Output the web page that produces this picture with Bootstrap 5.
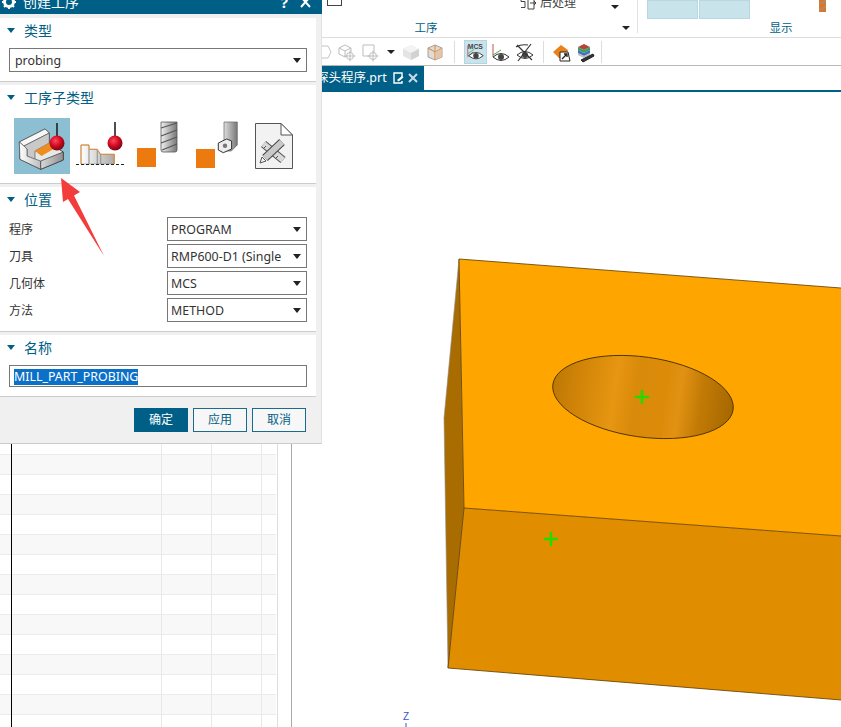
<!DOCTYPE html>
<html lang="zh-CN">
<head>
    <meta charset="UTF-8">
    <meta name="viewport" content="width=device-width, initial-scale=1.0">
    <title>创建工序</title>
    <link href="https://cdn.jsdelivr.net/npm/bootstrap@5.3.0/dist/css/bootstrap.min.css" rel="stylesheet">
    <style>
        html, body { height: 727px; overflow: hidden; }
        body {
            position: relative;
            background: #fff;
            color: #333;
            font-family: "Noto Sans", "Noto Sans CJK SC", sans-serif;
            font-size: 13px;
        }
        /* ribbon */
        .nx-ribbon { height: 38px; border-bottom: 1px solid #ddd; overflow: hidden; }
        .nx-group { height: 33px; border-right: 1px solid #e2e2e2; }
        .nx-group-a { width: 638px; }
        .nx-group-b { width: 203px; border-right: 0; }
        .nx-group-row { height: 21px; }
        .nx-group-label { height: 14px; line-height: 14px; font-size: 11.5px; color: #006085; position: relative; }
        .nx-check { width: 15px; height: 14px; margin-top: -8px; margin-left: 327px; border: 1px solid #444; background: #fff; }
        .nx-post { margin-left: 178px; margin-top: -6px; height: 18px; font-size: 12px; line-height: 18px; color: #444; }
        .nx-post svg { margin-right: 4px; }
        .nx-caret { width: 0; height: 0; border-left: 4px solid transparent; border-right: 4px solid transparent; border-top: 4px solid #222; }
        .nx-caret-post { margin-left: 35px; margin-top: 5px; }
        .nx-caret-group { position: absolute; left: 622px; top: 5px; }
        .nx-tile { width: 51px; height: 19px; background: #c9e3ea; border: 1px solid #b5d8e1; }
        .nx-tile-first { margin-left: 9px; margin-right: 1px; }
        .nx-drill { width: 7px; height: 12px; margin-left: 69px; background: repeating-linear-gradient(150deg, #d9762a 0 3px, #b7885f 3px 5px); }
        /* graphics toolbar */
        .nx-toolbar { height: 28px; padding-left: 310px; border-bottom: 1px solid #b9b9b9; }
        .nx-tool { width: 24px; height: 24px; }
        .nx-tool-on { width: 23px; background: #c9e3ec; border: 1px solid #b3d5e1; margin-left: 9px; margin-right: 1px; }
        .nx-tool-drop { width: 17px; height: 24px; }
        .nx-tool-sep { width: 1px; height: 22px; background: #ddd; margin-left: 7px; }
        .nx-sep-b { margin-right: 5px; }
        .nx-sep-c { margin-left: 4px; }
        /* file tab */
        .nx-tabs { height: 26px; border-bottom: 2px solid #005f87; }
        .nx-tab { height: 24px; margin-left: 316px; width: 108px; background: #005f87; color: #fff; font-size: 12.5px; white-space: nowrap; overflow: hidden; }
        .nx-tab svg { margin-left: 6px; flex: none; }
        .nx-tab svg + svg { margin-left: 4px; }
        /* left navigator */
        .nx-main { height: 635px; }
        .nx-nav { width: 292px; height: 635px; padding-top: 2px; border-right: 1px solid #aaa; overflow: hidden; flex: none; }
        .nx-grid { width: 278px; height: 100%; border-right: 1px solid #ddd; }
        .nx-nav .table { width: 276px; table-layout: fixed; margin: 0; --bs-table-bg: transparent; }
        .nx-nav .table td { height: 20px; padding: 0; border-top: 1px solid #ebebeb; border-bottom: 0; border-right: 1px solid #e8e8e8; }
        .nx-nav .table tr:nth-child(odd) td { background: #f8f8f8; }
        .nx-nav .table td:first-child { border-right: 1px solid #000; }
        .nx-nav .table td:last-child { border-right: 0; }
        /* dialog */
        .nx-dialog { position: absolute; left: 0; top: 0; width: 322px; height: 444px; background: #f0f0f0; border-right: 1px solid #e2e2e2; border-bottom: 1px solid #ccc; }
        .nx-title { height: 14px; background: #005f87; color: #fff; font-size: 14px; line-height: 20px; overflow: hidden; margin-right: -1px; margin-bottom: 4px; padding: 0 11px 10px 2px; }
        .nx-title span { margin-left: 7px; }
        .nx-title b { font-weight: 700; font-size: 15px; margin-left: auto; margin-right: 12px; }
        .nx-sect { background: #fff; margin-right: 5px; border-bottom: 1px solid #ccc; margin-bottom: 3px; padding: 0 9px 9px; }
        .nx-sect-last { margin-bottom: 0; }
        .nx-head { height: 26px; padding-bottom: 2px; color: #006085; font-size: 14px; }
        .nx-head i { width: 0; height: 0; margin: 0 9px 0 -2px; border-left: 4.5px solid transparent; border-right: 4.5px solid transparent; border-top: 5px solid #005f87; }
        .nx-field { height: 24px; margin-top: 3px; font-size: 12px; }
        .nx-field label { padding-top: 2px; }
        .nx-head + .nx-field { margin-top: 4px; }
        .nx-dialog .form-select {
            height: 24px;
            padding: 1px 24px 0 3px;
            font-size: 12.4px;
            line-height: 21px;
            color: #333;
            border: 1px solid #777;
            border-radius: 0;
            background-position: right 4px center;
            background-size: 10px 5px;
            background-image: url("data:image/svg+xml,%3csvg xmlns='http://www.w3.org/2000/svg' viewBox='0 0 10 5'%3e%3cpath d='M1 0h8L5 5z' fill='%23222'/%3e%3c/svg%3e");
        }
        .nx-field .form-select { width: 140px; }
        .nx-dialog .nx-pick { margin-top: 4px; padding-left: 5px; }
        .nx-name { height: 22px; margin-top: 4px; padding: 0 4px; line-height: 20px; font-size: 12.4px; border: 1px solid #777; border-radius: 0; min-height: 0; }
        .nx-name span { background: #0a70c8; color: #fff; display: inline-block; line-height: 16px; vertical-align: middle; }
        .nx-subtypes { margin: 7px 0 0 5px; gap: 3px; height: 56px; }
        .nx-subtype { width: 56px; height: 56px; }
        .nx-subtype-on { background: #8dbfd2; }
        .nx-foot { padding: 11px 15px 0 0; gap: 5px; }
        .nx-foot .btn { width: 54px; height: 24px; padding: 0; font-size: 12px; line-height: 22px; border-radius: 0; border: 1px solid #1c6a8c; color: #006085; background: #f7f7f7; }
        .nx-foot .btn-primary { background: #005f87; color: #fff; border-color: #005f87; }
        /* red arrow drawn on top */
        .nx-arrow { position: absolute; left: 55px; top: 172px; }
        .nx-view { display: block; flex: none; }
    </style>
</head>
<body>
    <div class="nx-ribbon d-flex">
        <div class="nx-group nx-group-a">
            <div class="nx-group-row d-flex">
                <div class="nx-check"></div>
                <div class="nx-post d-flex align-items-center">
                    <svg width="16" height="16" viewBox="0 0 16 16" fill="none" stroke="#444"><path d="M1 1.5h4M1 1.5v5h4v6H1M8 3v11h6V3M10 8h6M14 6l2 2-2 2"/></svg>
                    后处理
                </div>
                <div class="nx-caret nx-caret-post"></div>
            </div>
            <div class="nx-group-label text-center" style="padding-left: 215px">工序<div class="nx-caret nx-caret-group"></div></div>
        </div>
        <div class="nx-group nx-group-b">
            <div class="nx-group-row d-flex">
                <div class="nx-tile nx-tile-first"></div>
                <div class="nx-tile"></div>
                <div class="nx-drill"></div>
            </div>
            <div class="nx-group-label text-center" style="padding-left: 83px">显示</div>
        </div>
    </div>

    <div class="nx-toolbar d-flex align-items-center">
        <svg class="nx-tool" viewBox="0 0 24 24" fill="#fff" stroke="#c4c4c4"><path d="M12 6l6 0 3 6-3 6h-6l-3-6z"/></svg>
        <svg class="nx-tool" viewBox="0 0 24 24" fill="#fff" stroke="#bdbdbd"><path d="M5 8l6-3 6 3v6l-6 3-6-3zM5 8l6 3 6-3M11 11v6"/><circle cx="16" cy="16" r="3.5"/><path d="M16 10.5v11M10.5 16h11"/></svg>
        <svg class="nx-tool" viewBox="0 0 24 24" fill="#fff" stroke="#bdbdbd"><path d="M5 5h11v11H5z"/><circle cx="15" cy="16" r="3.5"/><path d="M15 10.5v11M9.5 16h11"/></svg>
        <div class="nx-tool-drop d-flex align-items-center justify-content-center"><div class="nx-caret"></div></div>
        <svg class="nx-tool" viewBox="0 0 24 24"><path d="M4 9l8-4 8 4v7l-8 4-8-4z" fill="#e4e4e4"/><path d="M4 9l8 4 8-4-8-4z" fill="#f3f3f3"/><path d="M12 13v7l8-4V9z" fill="#d2d2d2"/></svg>
        <svg class="nx-tool" viewBox="0 0 24 24"><path d="M5 8l7-3 7 3v9l-7 3-7-3z" fill="#dcdcdc" stroke="#b0a090"/><path d="M12 5v15M5 8l7 4 7-4" fill="none" stroke="#d98a3a"/><path d="M12 12v8l7-3V8z" fill="#e7bd95" opacity=".7"/></svg>
        <div class="nx-tool-sep"></div>
        <svg class="nx-tool nx-tool-on" viewBox="0 0 23 24"><text x="3" y="9" font-family="Liberation Sans, sans-serif" font-size="7.5" font-weight="700" fill="#444">MCS</text><path d="M3 5v12M3 17l6-5" fill="none" stroke="#c44" stroke-width=".8"/><path d="M3 14l7-5" stroke="#4a4" stroke-width=".8"/><path d="M4 16q8-7 16 0-8 7-16 0z" fill="#fff" stroke="#333"/><circle cx="12" cy="16" r="3" fill="#444"/></svg>
        <svg class="nx-tool" viewBox="0 0 24 24"><path d="M5 4v13" stroke="#b55" fill="none"/><path d="M5 15l8-5" stroke="#4a4" fill="none"/><path d="M5 17q8-7 16 0-8 7-16 0z" fill="#fff" stroke="#333"/><circle cx="13" cy="17" r="3" fill="#444"/></svg>
        <svg class="nx-tool" viewBox="0 0 24 24"><path d="M5 15q8-7 16 0-8 7-16 0z" fill="#fff" stroke="#333"/><circle cx="13" cy="15" r="3" fill="#444"/><path d="M5 5l15 15M19 4L6 21M4 7q5-3 12-2" fill="none" stroke="#333" stroke-width="1.2"/></svg>
        <div class="nx-tool-sep nx-sep-b"></div>
        <svg class="nx-tool" viewBox="0 0 24 24"><path d="M4 12l8-7 7 5-4 9-5-1z" fill="#e9821a"/><path d="M11 12h8l2 9H11z" fill="#fff" stroke="#222"/><path d="M13 19l5-5M15 14h3v3" fill="none" stroke="#222" stroke-width="1.3"/></svg>
        <svg class="nx-tool" viewBox="0 0 24 24"><path d="M5 7l6-3 6 3-6 3z" fill="#b5443a"/><path d="M5 7l6 3 6-3v3l-6 3-6-3z" fill="#3aa05a"/><path d="M5 10l6 3 6-3v3l-6 3-6-3z" fill="#3b72c4"/><path d="M5 13l6 3 6-3v2l-6 3-6-3z" fill="#bbb"/><path d="M8 20l12-6 1 2-11 6z" fill="#333" stroke="#222"/></svg>
        <div class="nx-tool-sep nx-sep-c"></div>
    </div>

    <div class="nx-tabs">
        <div class="nx-tab d-flex align-items-center">
            探头程序.prt
            <svg width="11" height="12" viewBox="0 0 11 12" fill="none" stroke="#fff" stroke-width="1.4"><path d="M9 5V1H1v10h8V9"/><path d="M4 8l5-4 1.5 1.5-5 4z" fill="#fff" stroke="none"/></svg>
            <svg width="10" height="10" viewBox="0 0 10 10" stroke="#c9dbe3" stroke-width="2"><path d="M1 1l8 8M9 1L1 9"/></svg>
        </div>
    </div>

    <div class="nx-main d-flex">
        <div class="nx-nav">
            <div class="nx-grid">
                <table class="table">
                    <colgroup><col style="width: 11px"><col style="width: 150px"><col style="width: 50px"><col style="width: 50px"><col></colgroup>
                    <tbody id="navRows"></tbody>
                </table>
            </div>
        </div>
        <svg class="nx-view" width="549" height="635" viewBox="292 92 549 635">
            <defs>
                <linearGradient id="holeShade" x1="0" x2="1" y1="0" y2="0">
                    <stop offset="0" stop-color="#bf7805"/>
                    <stop offset=".18" stop-color="#d58709"/>
                    <stop offset=".34" stop-color="#e69610"/>
                    <stop offset=".46" stop-color="#da8a0a"/>
                    <stop offset=".62" stop-color="#dc8b09"/>
                    <stop offset=".7" stop-color="#e29213"/>
                    <stop offset=".82" stop-color="#c27a05"/>
                    <stop offset="1" stop-color="#a56800"/>
                </linearGradient>
            </defs>
            <polygon points="459,259 444,418 448,668 464,508" fill="#a96c00" stroke="#8f8f8f" stroke-width=".6"/>
            <polygon points="464,508 841,536 841,700 448,668" fill="#e18d00"/>
            <polygon points="459,259 841,288 841,536 464,508" fill="#ffa500"/>
            <path d="M459 259L464 508L448 668M464 508L841 536M459 259L841 288M448 668L841 700" fill="none" stroke="#5c3a00" stroke-width=".8"/>
            <ellipse cx="643" cy="397" rx="91" ry="40" transform="rotate(8 643 397)" fill="url(#holeShade)" stroke="#4a3000" stroke-width=".9"/>
            <path d="M642 390v14M635 397h14M551 532v14M544 539h14" stroke="#22dc00" stroke-width="2.5"/>
            <text x="403" y="720" font-family="Liberation Sans, sans-serif" font-size="10" fill="#3a55c8">Z</text>
            <path d="M406 723v4" stroke="#3a55c8"/>
        </svg>
    </div>

    <div class="nx-dialog">
        <div class="nx-title d-flex align-items-center">
            <svg width="14" height="14" viewBox="0 0 14 14"><circle cx="7" cy="7" r="4.5" fill="none" stroke="#fff" stroke-width="3"/><path d="M7 0v3M7 11v3M0 7h3M11 7h3M2 2l2 2M10 10l2 2M12 2l-2 2M4 10l-2 2" stroke="#fff" stroke-width="2"/></svg>
            <span>创建工序</span>
            <b>?</b>
            <svg width="11" height="14" viewBox="0 0 11 14" stroke="#fff" stroke-width="2"><path d="M1 2l9 10M10 2L1 12"/></svg>
        </div>

        <section class="nx-sect">
            <div class="nx-head d-flex align-items-center"><i></i>类型</div>
            <select class="form-select nx-pick"><option>probing</option></select>
        </section>

        <section class="nx-sect">
            <div class="nx-head d-flex align-items-center"><i></i>工序子类型</div>
            <div class="nx-subtypes d-flex">
                <svg class="nx-subtype nx-subtype-on" viewBox="0 0 56 56">
                    <defs>
                        <linearGradient id="g1" x1="0" x2="1"><stop offset="0" stop-color="#d8d8d8"/><stop offset="1" stop-color="#8f8f8f"/></linearGradient>
                        <linearGradient id="g1b" x1="0" x2="1"><stop offset="0" stop-color="#fff"/><stop offset="1" stop-color="#bdbdbd"/></linearGradient>
                        <radialGradient id="ball" cx=".4" cy=".35" r=".7"><stop offset="0" stop-color="#ff4a5c"/><stop offset=".5" stop-color="#d20a22"/><stop offset="1" stop-color="#6c0612"/></radialGradient>
                    </defs>
                    <path d="M5.300 24L31 11l4.300 4v10L49.300 34v8l-22.600 9.300L6 41.300z" fill="#e8e8e8" stroke="#444"/>
                    <path d="M5.300 24L31 11l4.300 4L10 28z" fill="#f7f7f7" stroke="#555" stroke-width=".7"/>
                    <path d="M10 28l25.300-13v10L21 33v9l-8-4V31z" fill="#c9c9c9" stroke="#555" stroke-width=".7"/>
                    <path d="M21 33l14.300-8 6 5L27.500 38z" fill="#ee8c1e"/>
                    <path d="M6 41.300l20.700 10V43L21 41l-8-3V31l-3-3-4.700-4z" fill="url(#g1b)" stroke="#555" stroke-width=".7"/>
                    <path d="M26.700 51.300L49.300 42v-8L26.700 43z" fill="url(#g1)" stroke="#444" stroke-width=".8"/>
                    <path d="M43 5v14" stroke="#222" stroke-width="1.600"/>
                    <circle cx="43" cy="25" r="7.500" fill="url(#ball)"/>
                </svg>
                <svg class="nx-subtype" viewBox="0 0 56 56">
                    <defs><linearGradient id="g2" x1="0" x2="1"><stop offset="0" stop-color="#fff"/><stop offset="1" stop-color="#a9a9a9"/></linearGradient></defs>
                    <path d="M8 46V27h8v19zM16 46V31.300h8.300V46zM24.300 46V32.300l3.400 4V46zM27.700 46v-9.700h13.600V46z" fill="url(#g2)" stroke="#8c8c8c" stroke-width=".6"/>
                    <path d="M8 46V27h8v4.300h8.300l3.400 5h13.600V46" fill="none" stroke="#e98a2e"/>
                    <path d="M3 46.500h48" stroke="#222" stroke-dasharray="3 2"/>
                    <path d="M42 4v14" stroke="#222" stroke-width="1.600"/>
                    <circle cx="42" cy="25" r="7.500" fill="url(#ball)"/>
                </svg>
                <svg class="nx-subtype" viewBox="0 0 56 56">
                    <defs><linearGradient id="g3" x1="0" x2="1"><stop offset="0" stop-color="#f0f0f0"/><stop offset="1" stop-color="#777"/></linearGradient></defs>
                    <rect x="5" y="30" width="19" height="19" fill="#ec7a0f"/>
                    <path d="M29 4h16v28q0 2-2 2H31q-2 0-2-2z" fill="url(#g3)" stroke="#555" stroke-width=".8"/>
                    <path d="M29 10l16-5M29 18l16-6M29 25l16-6M30 32l15-6" stroke="#555" stroke-width="1.200"/>
                </svg>
                <svg class="nx-subtype" viewBox="0 0 56 56">
                    <defs><linearGradient id="g4" x1="0" x2="1"><stop offset="0" stop-color="#ddd"/><stop offset="1" stop-color="#777"/></linearGradient></defs>
                    <rect x="5" y="31" width="19" height="19" fill="#ec7a0f"/>
                    <path d="M33 4h13.300v23l-6 6H33z" fill="url(#g4)" stroke="#666" stroke-width=".7"/>
                    <path d="M27.300 25l8.300-4 5 2v8l-8.300 3.700-5-2.700z" fill="#eee" stroke="#333"/>
                    <circle cx="34" cy="27.700" r="2.200" fill="#777"/>
                </svg>
                <svg class="nx-subtype" viewBox="0 0 56 56">
                    <path d="M5.500 5.500H31L42.500 17v33.500h-37z" fill="#f2f2f2" stroke="#555"/>
                    <path d="M31 5.500V17h11.500z" fill="#fff" stroke="#555"/>
                    <path d="M13.500 26L33 42" stroke="#555" stroke-width="8"/><path d="M13.500 26L33 42" stroke="#d9d9d9" stroke-width="6"/>
                    <path d="M16 28l-2 2M20 31l-2 2M24 35l-2 2M28 38l-2 2" stroke="#555"/>
                    <path d="M32 24L15 40" stroke="#444" stroke-width="8"/><path d="M32 24L15 40" stroke="#c9c9c9" stroke-width="6"/>
                    <path d="M12 39l4 4-6 2z" fill="#f5f5f5" stroke="#555"/>
                </svg>
            </div>
        </section>

        <section class="nx-sect">
            <div class="nx-head d-flex align-items-center"><i></i>位置</div>
            <div class="nx-field d-flex align-items-center justify-content-between"><label>程序</label><select class="form-select"><option>PROGRAM</option></select></div>
            <div class="nx-field d-flex align-items-center justify-content-between"><label>刀具</label><select class="form-select"><option>RMP600-D1 (Single Touch)</option></select></div>
            <div class="nx-field d-flex align-items-center justify-content-between"><label>几何体</label><select class="form-select"><option>MCS</option></select></div>
            <div class="nx-field d-flex align-items-center justify-content-between"><label>方法</label><select class="form-select"><option>METHOD</option></select></div>
        </section>

        <section class="nx-sect nx-sect-last">
            <div class="nx-head d-flex align-items-center"><i></i>名称</div>
            <div class="form-control nx-name"><span>MILL_PART_PROBING</span></div>
        </section>

        <div class="nx-foot d-flex justify-content-end">
            <button type="button" class="btn btn-primary">确定</button>
            <button type="button" class="btn">应用</button>
            <button type="button" class="btn">取消</button>
        </div>
    </div>

    <svg class="nx-arrow" width="56" height="90" viewBox="55 172 56 90"><polygon points="61,178 80,192 74,195.500 104,256 68,199 63,202" fill="#f33c3c"/></svg>

    <script src="https://cdn.jsdelivr.net/npm/bootstrap@5.3.0/dist/js/bootstrap.bundle.min.js"></script>
    <script>
        // empty rows of the table behind the dialog
        var rows = "";
        for (var i = 0; i < 32; i++) {
            rows += "<tr><td></td><td></td><td></td><td></td><td></td></tr>";
        }
        document.getElementById("navRows").innerHTML = rows;
    </script>
</body>
</html>
